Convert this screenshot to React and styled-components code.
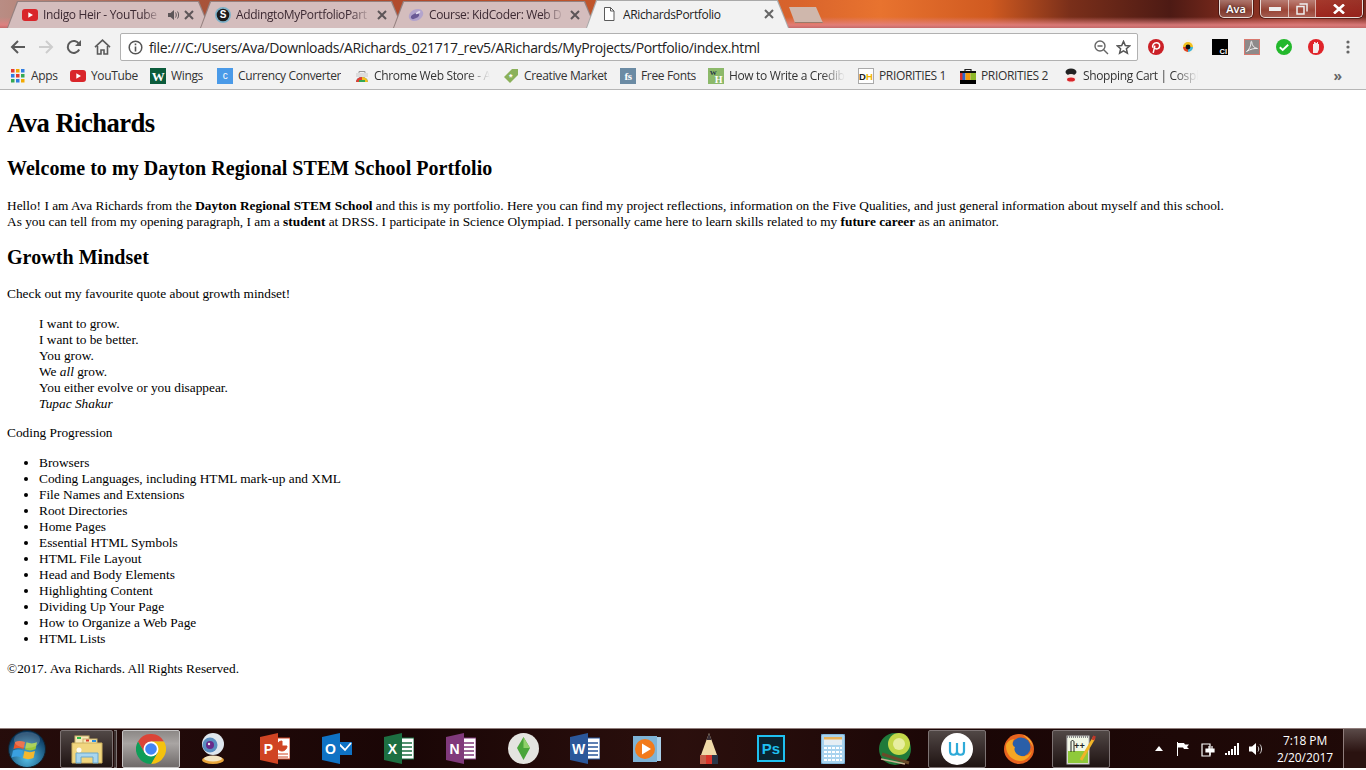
import React from 'react'
import styled, { createGlobalStyle } from 'styled-components'

const GlobalStyle = createGlobalStyle`
  html, body { margin: 0; padding: 0; background: #fff; overflow: hidden; }
`

const UI_FONT = `'Open Sans', 'Noto Sans', sans-serif`

const Screen = styled.div`
  width: 1366px;
  height: 770px;
  display: flex;
  flex-direction: column;
  background: #fff;
  overflow: hidden;
`

/* ---------- title bar + tabs ---------- */

const TitleBar = styled.div`
  height: 28px;
  flex: none;
  display: flex;
  align-items: flex-end;
  padding-left: 7px;
  position: relative;
  background:
    linear-gradient(180deg, rgba(224, 120, 120, 0) 0, rgba(224, 120, 120, 0) 17px, rgba(226, 128, 128, 0.9) 25px, #c56a6a 28px),
    linear-gradient(90deg, #b98d84 0, #a8533a 200px, #b2492a 420px, #c0552a 600px, #d9642c 800px, #e8732f 880px, #d05a20 990px, #7a2f1a 1070px, #4d1a14 1170px, #7c2a1c 1230px, #9a3a2a 1300px, #7a2a20 1366px);
`

const TabShape = styled.div`
  width: 203px;
  height: 27px;
  flex: none;
  margin-right: -10px;
  position: relative;
  display: flex;
  align-items: center;
  padding: 0 14px 0 15px;
  box-sizing: border-box;
  background: ${p => (p.$active ? '#a9a9a9' : '#94807f')};
  clip-path: polygon(10px 0, calc(100% - 11px) 0, 100% 100%, 0 100%);
  font: 12px ${UI_FONT};
  letter-spacing: -0.35px;
  color: ${p => (p.$active ? '#222' : '#3d2a33')};
  ${p => p.$active && 'height: 28px;'}

  &::before {
    content: '';
    position: absolute;
    inset: 1px 1px 0 1px;
    background: ${p => (p.$active ? '#f2f2f2' : '#d4bdbd')};
    clip-path: polygon(10px 0, calc(100% - 11px) 0, 100% 100%, 0 100%);
  }
`

const TabIcon = styled.span`
  width: 16px;
  height: 16px;
  flex: none;
  margin-right: ${p => p.$mr ?? 5}px;
  display: flex;
  position: relative;
`

const TabTitle = styled.span`
  width: ${p => p.$w}px;
  flex: none;
  overflow: hidden;
  white-space: nowrap;
  position: relative;
  ${p => p.$fade && `
    mask-image: linear-gradient(90deg, #000 85%, transparent 100%);
  `}
`

const TabIconSlot = styled.span`
  display: flex;
  position: relative;
  flex: none;
  margin-left: ${p => p.$ml || 0}px;
`

const NewTab = styled.div`
  width: 34px;
  height: 16px;
  margin: 0 0 5px 10px;
  background: #cfb7ac;
  border-bottom: 1px solid #9a7a6a;
  box-sizing: border-box;
  clip-path: polygon(0 0, 27px 0, 100% 100%, 6px 100%);
  flex: none;
`

const WindowControls = styled.div`
  position: absolute;
  top: 0;
  right: 3px;
  display: flex;
  gap: 7px;
`

const GlassButton = styled.div`
  height: 18px;
  display: flex;
  box-sizing: border-box;
  border: 1px solid #e8dcd8;
  border-top: 0;
  border-radius: 0 0 5px 5px;
  box-shadow: 0 0 0 1px rgba(40, 10, 10, 0.55);
  overflow: hidden;
  font: 600 11px ${UI_FONT};
  color: #fff;
  text-shadow: 0 0 3px #222;
`

const GlassCell = styled.span`
  width: ${p => p.$w}px;
  box-sizing: border-box;
  display: flex;
  align-items: center;
  justify-content: center;
  background: linear-gradient(180deg, rgba(255, 255, 255, 0.35), rgba(255, 255, 255, 0.08) 60%, rgba(255, 255, 255, 0.2));
  border-left: ${p => (p.$sep ? '1px solid rgba(255,255,255,.6)' : '0')};
  ${p => p.$red && 'background: linear-gradient(180deg, rgba(190, 60, 50, .45), rgba(160, 30, 25, .7));'}
`

/* ---------- toolbar ---------- */

const Toolbar = styled.div`
  height: 34px;
  flex: none;
  box-sizing: border-box;
  display: flex;
  align-items: center;
  background: #f2f2f2;
  padding: 4px 0 0 4px;
`

const NavButton = styled.span`
  width: 28px;
  height: 28px;
  flex: none;
  display: flex;
  align-items: center;
  justify-content: center;
`

const Omnibox = styled.div`
  width: 1018px;
  height: 28px;
  margin-left: 4px;
  box-sizing: border-box;
  border: 1px solid #b1b1b1;
  border-radius: 2px;
  background: #fff;
  display: flex;
  align-items: center;
  gap: 7px;
  padding: 0 6px 0 7px;
  flex: none;
`

const Url = styled.span`
  flex: 1;
  margin-left: -1px;
  font: 14px ${UI_FONT};
  letter-spacing: -0.34px;
  color: #222;
  white-space: nowrap;
`

const ExtIcons = styled.div`
  display: flex;
  margin-left: 2px;
`

const ExtSlot = styled.span`
  width: 32px;
  height: 28px;
  display: flex;
  align-items: center;
  justify-content: center;
  flex: none;
`

/* ---------- bookmarks ---------- */

const BookmarkBar = styled.div`
  height: 28px;
  flex: none;
  box-sizing: border-box;
  display: flex;
  align-items: center;
  background: #f2f2f2;
  border-bottom: 1px solid #b6b6b6;
  padding-left: 11px;
`

const Bookmark = styled.div`
  width: ${p => p.$w}px;
  flex: none;
  display: flex;
  align-items: center;
  gap: ${p => p.$gap ?? 5}px;
  font: 12px ${UI_FONT};
  letter-spacing: -0.35px;
  color: #333;
  white-space: nowrap;
  overflow: hidden;
`

const BookmarkLabel = styled.span`
  overflow: hidden;
  width: ${p => (p.$tw ? `${p.$tw}px` : 'auto')};
  flex: none;
  ${p => p.$fade && 'mask-image: linear-gradient(90deg, #000 80%, transparent 100%);'}
`

const Overflow = styled.span`
  margin-left: auto;
  margin-right: 24px;
  font: 700 14px ${UI_FONT};
  color: #666;
`

/* ---------- page ---------- */

const Page = styled.main`
  flex: 1;
  padding: 0 7px;
  font-family: 'Liberation Serif', 'Times New Roman', serif;
  font-size: 13.33px;
  line-height: 16px;
  color: #000;
  overflow: hidden;

  h1 { font-size: 26.67px; line-height: 30px; margin: 17.87px 0; letter-spacing: -0.55px; }
  h2 { font-size: 20px; line-height: 24px; margin: 14.8px 0 17.4px; letter-spacing: 0.05px; }
  h1 + h2 { margin: 16.6px 0 18.4px; }
  p { margin: 13.33px 0; }
`

const Quote = styled.blockquote`
  margin: 13.33px 32px;
`

const Topics = styled.ul`
  margin: 14.5px 0 13.33px;
  padding-left: 32px;
`

/* ---------- taskbar ---------- */

const Taskbar = styled.footer`
  height: 40px;
  flex: none;
  margin-bottom: 2px;
  display: flex;
  align-items: stretch;
  box-sizing: border-box;
  border-top: 1px solid #8f7d7b;
  background:
    linear-gradient(90deg, rgba(60, 25, 20, 0.35), rgba(30, 5, 5, 0) 30%, rgba(60, 25, 20, 0.5) 50%, rgba(20, 5, 5, 0) 70%, rgba(40, 15, 10, 0.4)),
    #1a0606;
  color: #fff;
`

const Orb = styled.div`
  width: 58px;
  flex: none;
  display: flex;
  align-items: center;
  justify-content: center;
  padding-right: 4px;
  box-sizing: border-box;
`

const TaskSlot = styled.div`
  width: 62px;
  flex: none;
  display: flex;
  align-items: center;
  justify-content: ${p => (p.$pinned ? 'flex-start' : 'center')};
  padding-left: ${p => (p.$pinned ? 2 : 0)}px;
  box-sizing: border-box;
  gap: 1px;
`

const TaskButton = styled.div`
  width: ${p => p.$w || 58}px;
  height: 38px;
  flex: none;
  box-sizing: border-box;
  display: flex;
  align-items: center;
  justify-content: center;
  border: 1px solid ${p => (p.$active ? '#c6c4c4' : '#7d7373')};
  border-radius: 2px;
  background: ${p => (p.$active
    ? 'linear-gradient(180deg, #8c8886 0, #a9a5a3 35%, #6f6a69 100%)'
    : 'linear-gradient(180deg, #514846 0, #3a2f2e 45%, #1f1412 100%)')};
`

const StackTail = styled.span`
  width: 3px;
  height: 38px;
  flex: none;
  box-sizing: border-box;
  border: 1px solid #7d7373;
  border-left: 0;
  background: #3a2f2e;
`

const Tray = styled.div`
  flex: 1;
  display: flex;
  align-items: center;
  justify-content: flex-end;
`

const TrayIcon = styled.span`
  width: ${p => p.$w || 24}px;
  display: flex;
  justify-content: center;
  flex: none;
`

const Clock = styled.div`
  width: 70px;
  margin-left: 2px;
  text-align: center;
  font: 12px/17px ${UI_FONT};
  letter-spacing: -0.1px;
  color: #fff;
  flex: none;
`

const ShowDesktop = styled.div`
  width: 23px;
  flex: none;
  margin-left: 3px;
  border-left: 1px solid #8f7d7b;
  box-sizing: border-box;
  background: linear-gradient(180deg, #5a4a48, #2a1210 60%);
`

/* ---------- icons ---------- */

const Ytb = ({ s = 16 }) => (
  <svg width={s} height={s} viewBox="0 0 16 16">
    <rect x="0" y="2" width="16" height="12" rx="3" fill="#d9252a" />
    <path d="M6.3 5.2v5.6L11 8z" fill="#fff" />
  </svg>
)

const Steemit = () => (
  <svg width="16" height="16" viewBox="0 0 16 16">
    <circle cx="8" cy="8" r="8" fill="#7fb2c9" />
    <circle cx="8" cy="8" r="6.3" fill="#1c1c1c" />
    <text x="8" y="11.3" textAnchor="middle" fontSize="10" fontWeight="700" fontFamily="Liberation Sans" fill="#fff">S</text>
  </svg>
)

const Planet = () => (
  <svg width="16" height="16" viewBox="0 0 16 16">
    <ellipse cx="8" cy="8" rx="7.6" ry="5.6" transform="rotate(-28 8 8)" fill="#b3a4cc" />
    <ellipse cx="7" cy="9" rx="4.5" ry="2.4" transform="rotate(-28 7 9)" fill="#6a5a96" />
    <ellipse cx="10" cy="5.6" rx="2.6" ry="1.1" transform="rotate(-28 10 5.6)" fill="#e6e0f0" />
  </svg>
)

const PageDoc = () => (
  <svg width="16" height="16" viewBox="0 0 16 16" fill="none" stroke="#5a5a5a" strokeWidth="1">
    <path d="M3.5 1.5h6l3.5 3.5v9.5h-9.5z" fill="#fff" />
    <path d="M9.5 1.5v3.5H13" />
  </svg>
)

const CloseX = ({ c = '#5d5558' }) => (
  <svg width="10" height="10" viewBox="0 0 10 10">
    <path d="M1 1l8 8M9 1l-8 8" stroke={c} strokeWidth="2" />
  </svg>
)

const Speaker = () => (
  <svg width="11" height="10" viewBox="0 0 11 10" fill="#5d5558">
    <path d="M0 3h2.5L6 0v10L2.5 7H0z" />
    <path d="M7.5 2.5c1 1.5 1 3.5 0 5M9.5 1.5c1.5 2 1.5 5 0 7" stroke="#5d5558" strokeWidth="1" fill="none" />
  </svg>
)

const Back = ({ c = '#5a5a5a' }) => (
  <svg width="16" height="14" viewBox="0 0 16 14" fill="none" stroke={c} strokeWidth="2">
    <path d="M15 7H2M8 1L2 7l6 6" />
  </svg>
)

const Forward = ({ c = '#cdcdcd' }) => (
  <svg width="16" height="14" viewBox="0 0 16 14" fill="none" stroke={c} strokeWidth="2">
    <path d="M1 7h13M8 1l6 6-6 6" />
  </svg>
)

const Reload = () => (
  <svg width="16" height="16" viewBox="0 0 16 16" fill="none">
    <path d="M13.2 10.5A6 6 0 1 1 13 5" stroke="#5a5a5a" strokeWidth="2" />
    <path d="M15 1v6H9z" fill="#5a5a5a" />
  </svg>
)

const HomeIcon = () => (
  <svg width="17" height="16" viewBox="0 0 17 16" fill="none" stroke="#5a5a5a" strokeWidth="1.6">
    <path d="M1 8.2L8.5 1.2 16 8.2" />
    <path d="M3.5 7v8H7v-4h3v4h3.5V7" />
  </svg>
)

const InfoIcon = () => (
  <svg width="15" height="15" viewBox="0 0 15 15" fill="none">
    <circle cx="7.5" cy="7.5" r="6.3" stroke="#555" strokeWidth="1.5" />
    <path d="M7.5 6.5v5M7.5 3.5v1.8" stroke="#555" strokeWidth="1.6" />
  </svg>
)

const ZoomOut = () => (
  <svg width="15" height="15" viewBox="0 0 15 15" fill="none" stroke="#666" strokeWidth="1.4">
    <circle cx="6" cy="6" r="5" />
    <path d="M3.5 6h5M9.7 9.7L14 14" />
  </svg>
)

const Star = () => (
  <svg width="15" height="15" viewBox="0 0 15 15" fill="none" stroke="#555" strokeWidth="1.5">
    <path d="M7.5 1.4l1.8 4.1 4.4.4-3.3 2.9 1 4.4-3.9-2.3-3.9 2.3 1-4.4L1.3 5.9l4.4-.4z" />
  </svg>
)

const Pinterest = () => (
  <svg width="16" height="16" viewBox="0 0 16 16">
    <circle cx="8" cy="8" r="8" fill="#cb2027" />
    <path d="M5.2 13.8l1.7-7.2M5 8.8C3.8 6 6 3.7 8.4 3.7c2.3 0 3.6 1.7 3.2 3.8-.4 2-2.8 3.2-4.5 1.8" stroke="#fff" strokeWidth="1.5" fill="none" />
  </svg>
)

const ColorPick = () => (
  <svg width="16" height="16" viewBox="0 0 16 16">
    <circle cx="8" cy="8" r="7.5" fill="#f4f0ea" />
    <path d="M3 8a5 5 0 0 1 10 0z" fill="#f3c11e" />
    <path d="M13 8a5 5 0 0 1-5 5 3 3 0 0 1 2-5z" fill="#3fb4d8" />
    <path d="M3 8a5 5 0 0 0 5 5V8z" fill="#e2411f" />
    <circle cx="8" cy="8" r="2.4" fill="#111" />
  </svg>
)

const CiBadge = () => (
  <svg width="16" height="16" viewBox="0 0 16 16">
    <rect width="16" height="16" fill="#000" />
    <text x="15" y="14.5" textAnchor="end" fontSize="7.5" fontWeight="700" fontFamily="Liberation Sans" fill="#fff">CI</text>
  </svg>
)

const PdfIcon = () => (
  <svg width="16" height="16" viewBox="0 0 16 16">
    <rect x=".5" y=".5" width="15" height="15" fill="#8e8a8a" stroke="#d8796f" />
    <path d="M2.5 12.5C5 11 7 7 7 3c0-1 .8-1 .8 0 0 3 2 6 5.7 6.5-3-.3-7 .5-11 3z" fill="none" stroke="#eee" strokeWidth="1" />
  </svg>
)

const CheckBadge = () => (
  <svg width="16" height="16" viewBox="0 0 16 16">
    <circle cx="8" cy="8" r="8" fill="#23b82c" />
    <path d="M3.8 8.3l2.9 2.7 5.5-5.2" stroke="#fff" strokeWidth="1.9" fill="none" />
  </svg>
)

const OperaStop = () => (
  <svg width="16" height="16" viewBox="0 0 16 16">
    <circle cx="8" cy="8" r="8" fill="#e0242a" />
    <path d="M5 14V5h1V3h1.5v1H9V3h1v2h1v5.500L9.5 14z" fill="#f3ecec" />
  </svg>
)

const Dots = () => (
  <svg width="4" height="14" viewBox="0 0 4 14" fill="#666">
    <circle cx="2" cy="2" r="1.6" />
    <circle cx="2" cy="7" r="1.6" />
    <circle cx="2" cy="12" r="1.6" />
  </svg>
)

const AppsGrid = () => {
  const cols = ['#e53b2f', '#f2a900', '#2f7de1', '#2f7de1', '#e53b2f', '#34a853', '#34a853', '#2f7de1', '#f2a900']
  return (
    <svg width="14" height="14" viewBox="0 0 14 14">
      {cols.map((c, i) => (
        <rect key={i} x={(i % 3) * 5} y={Math.floor(i / 3) * 5} width="3.5" height="3.5" fill={c} />
      ))}
    </svg>
  )
}

const Tile = ({ bg, fg = '#fff', t, size = 12, family = 'Liberation Serif', weight = 700, y = 12.5 }) => (
  <svg width="16" height="16" viewBox="0 0 16 16">
    <rect width="16" height="16" fill={bg} />
    <text x="8" y={y} textAnchor="middle" fontSize={size} fontWeight={weight} fontFamily={family} fill={fg}>{t}</text>
  </svg>
)

const StoreIcon = () => (
  <svg width="16" height="16" viewBox="0 0 16 16">
    <path d="M5 6V3.5h6V6" fill="none" stroke="#999" />
    <rect x="2" y="5" width="12" height="4" fill="#ddd" />
    <path d="M2 14a6 5 0 0 1 12 0z" fill="#3a87d9" />
    <path d="M2 14a6 5 0 0 1 6-5v5z" fill="#e2402f" />
    <path d="M8 9a6 5 0 0 1 6 5H8z" fill="#f3c11e" />
    <rect x="5" y="12" width="6" height="2" fill="#34a853" />
  </svg>
)

const MarketTag = () => (
  <svg width="16" height="16" viewBox="0 0 16 16">
    <path d="M1 9l8-8h6v6l-8 8z" fill="#8bb15a" />
    <text x="7.5" y="12" textAnchor="middle" fontSize="9" fontWeight="700" fontFamily="Liberation Sans" fill="#fff">*</text>
  </svg>
)

const HowIcon = () => (
  <svg width="16" height="16" viewBox="0 0 16 16">
    <rect width="16" height="16" fill="#8cb96a" />
    <text x="5" y="7" textAnchor="middle" fontSize="7" fontWeight="700" fontFamily="Liberation Serif" fill="#234">W</text>
    <text x="10.5" y="15" textAnchor="middle" fontSize="10" fontWeight="700" fontFamily="Liberation Serif" fill="#fff">H</text>
  </svg>
)

const DhIcon = () => (
  <svg width="16" height="16" viewBox="0 0 16 16">
    <rect x=".5" y=".5" width="15" height="15" fill="#fff" stroke="#aaa" />
    <text x="1" y="12" fontSize="9.5" fontWeight="700" fontFamily="Liberation Sans" fill="#222">D</text>
    <text x="8" y="12" fontSize="9.5" fontWeight="700" fontFamily="Liberation Sans" fill="#f2b400">H</text>
  </svg>
)

const BagIcon = () => (
  <svg width="16" height="16" viewBox="0 0 16 16">
    <path d="M5 4V1.5h6V4" fill="none" stroke="#222" strokeWidth="1.2" />
    <rect y="3" width="16" height="2" fill="#111" />
    <rect y="5" width="5.5" height="7" fill="#2b66d0" />
    <rect x="5.5" y="5" width="5" height="7" fill="#f29a10" />
    <rect x="10.5" y="5" width="5.5" height="7" fill="#8fb82a" />
    <rect y="5" width="2.5" height="7" fill="#d9302a" />
    <rect y="12" width="16" height="4" fill="#000" />
  </svg>
)

const CosplayIcon = () => (
  <svg width="16" height="16" viewBox="0 0 16 16">
    <ellipse cx="8" cy="4" rx="5.5" ry="3.5" fill="#222" />
    <ellipse cx="8" cy="10.5" rx="5" ry="4.5" fill="#f6e8e4" />
    <ellipse cx="8" cy="11.5" rx="4" ry="2" fill="#d9252a" />
  </svg>
)

const WinOrb = () => (
  <svg width="38" height="38" viewBox="0 0 38 38">
    <defs>
      <radialGradient id="orb" cx="50%" cy="75%" r="65%">
        <stop offset="0" stopColor="#55c0e8" />
        <stop offset="1" stopColor="#0b3a62" />
      </radialGradient>
    </defs>
    <circle cx="19" cy="19" r="18.5" fill="url(#orb)" stroke="#12222e" />
    <path d="M7 12c3-1.5 6-1.5 10 0l-1.5 7c-3.5-1.5-6.5-1.5-10 0z" fill="#e8562a" />
    <path d="M18.5 12.3c3.5 1.5 7 1.5 10.5 0l-1.5 7c-3.5 1.5-7 1.5-10.5 0z" fill="#9cc83a" />
    <path d="M5 20.5c3.5-1.5 6.5-1.5 10 0l-1.5 7c-3.5-1.5-6.5-1.5-10 0z" fill="#3aa0e0" />
    <path d="M16.5 21c3.5 1.5 7 1.5 10.5 0l-1.5 7c-3.5 1.5-7 1.5-10.5 0z" fill="#f4b82e" />
    <ellipse cx="19" cy="10" rx="13" ry="8" fill="#fff" opacity=".18" />
  </svg>
)

const Explorer = () => (
  <svg width="32" height="30" viewBox="0 0 32 30">
    <rect x="4" y="2" width="14" height="8" fill="#f7e9b8" stroke="#c9b168" />
    <rect x="6" y="3" width="4" height="2" fill="#2fb84a" />
    <rect x="12" y="5" width="14" height="6" fill="#f7e9b8" stroke="#c9b168" />
    <rect x="15" y="5.5" width="3" height="2" fill="#d93a2a" />
    <rect x="21" y="6" width="4" height="2" fill="#2f8fe0" />
    <path d="M1 9h30v20H1z" fill="#f1d67f" stroke="#cdb060" />
    <path d="M5 29V19h22v10h-5v-6H10v6z" fill="#a8d6ef" stroke="#6aa8cc" />
    <circle cx="8" cy="16" r="2.5" fill="#fff" opacity=".9" />
  </svg>
)

const ChromeLogo = () => (
  <svg width="30" height="30" viewBox="0 0 30 30">
    <path d="M28 7.5A15 15 0 0 0 2 7.5L8.5 18.75 15 15V7.5z" fill="#db4437" />
    <path d="M28 7.5A15 15 0 0 1 15 30l6.5-11.25L15 15V7.5z" fill="#f4c20d" />
    <path d="M15 30A15 15 0 0 1 2 7.5l6.5 11.25L15 15l6.5 3.75z" fill="#0f9d58" />
    <circle cx="15" cy="15" r="7.5" fill="#fff" />
    <circle cx="15" cy="15" r="5.8" fill="#4285f4" />
  </svg>
)

const Webcam = () => (
  <svg width="26" height="32" viewBox="0 0 26 32">
    <ellipse cx="13" cy="27" rx="11" ry="4" fill="#e9a63c" />
    <ellipse cx="13" cy="25.5" rx="9" ry="3" fill="#f3e5c4" />
    <circle cx="13" cy="11" r="11" fill="#dfe7ee" />
    <circle cx="10" cy="12" r="7.5" fill="#5a8ec0" />
    <circle cx="10" cy="12" r="4" fill="#6a2a8a" />
    <circle cx="9" cy="11" r="1.2" fill="#eee" />
  </svg>
)

const OfficeIcon = ({ dark, letter, chart }) => (
  <svg width="30" height="31" viewBox="0 0 30 31">
    <rect x="15" y="5" width="15" height="21" fill="#fff" stroke={dark} strokeWidth="1" />
    {chart
      ? <path d="M22 8a5 5 0 1 0 5 5h-5zM18 21h10M18 24h10" fill={dark} stroke={dark} />
      : <path d="M18 10h10M18 14h10M18 18h10M18 22h10" stroke={dark} strokeWidth="1.6" />}
    <path d="M0 4L18 0v31L0 27z" fill={dark} />
    <text x="8.5" y="21" textAnchor="middle" fontSize="14" fontWeight="700" fontFamily="Liberation Sans" fill="#fff">{letter}</text>
  </svg>
)

const OutlookEnv = () => (
  <svg width="30" height="31" viewBox="0 0 30 31">
    <rect x="15" y="9" width="15" height="13" fill="#0f72c4" />
    <path d="M16 10l7 7 6-7" fill="none" stroke="#fff" strokeWidth="1.8" />
    <path d="M0 4L18 0v31L0 27z" fill="#0f72c4" />
    <text x="8.5" y="21" textAnchor="middle" fontSize="14" fontWeight="700" fontFamily="Liberation Sans" fill="#fff">O</text>
  </svg>
)

const Sims = () => (
  <svg width="31" height="31" viewBox="0 0 31 31">
    <circle cx="15.5" cy="15.5" r="15.5" fill="#e4e4e0" />
    <path d="M15.5 4L22 15l-6.500 12L9 15z" fill="#4aa53a" />
    <path d="M15.5 4L22 15h-6.500z" fill="#8fd06a" />
  </svg>
)

const MediaPlayer = () => (
  <svg width="28" height="26" viewBox="0 0 28 26">
    <rect x="3" y="1" width="25" height="24" fill="#a9cfe8" />
    <rect x="0" y="0" width="24" height="26" fill="#7eb3d6" />
    <circle cx="12" cy="13" r="10" fill="#f27a1a" />
    <path d="M9 7.5v11l9-5.5z" fill="#fff" />
  </svg>
)

const Pencil = () => (
  <svg width="18" height="32" viewBox="0 0 18 32">
    <path d="M9 0L1 22h16z" fill="#f0d9a8" />
    <path d="M9 0L6.5 7h5z" fill="#3a3038" />
    <path d="M0 22h6v9H0z" fill="#c4604a" />
    <path d="M6 22h6v9H6z" fill="#d9342a" />
    <path d="M12 22h6v9h-6z" fill="#2a3648" />
  </svg>
)

const Photoshop = () => (
  <svg width="28" height="27" viewBox="0 0 28 27">
    <rect x="1" y="1" width="26" height="25" fill="#0a2430" stroke="#1fc0f0" strokeWidth="2" />
    <text x="14" y="19" textAnchor="middle" fontSize="15" fontWeight="700" fontFamily="Liberation Sans" fill="#1fc0f0">Ps</text>
  </svg>
)

const Calc = () => (
  <svg width="24" height="30" viewBox="0 0 24 30">
    <rect width="24" height="30" rx="2" fill="#a9d3ee" stroke="#5e9cc6" />
    <rect x="3" y="3" width="18" height="8" fill="#e6eef4" />
    <rect x="3" y="3" width="18" height="2.5" fill="#e8b25a" />
    <path d="M3 14h18M3 18h18M3 22h18M3 26h18" stroke="#fff" strokeWidth="2" strokeDasharray="3 1" />
  </svg>
)

const PaintBall = () => (
  <svg width="32" height="32" viewBox="0 0 32 32">
    <circle cx="16" cy="16" r="16" fill="#1f7a3a" />
    <circle cx="20" cy="11" r="11" fill="#c4d84a" />
    <circle cx="20" cy="11" r="6" fill="#e7eea0" />
    <path d="M3 21L30 30" stroke="#6a4a2a" strokeWidth="3" />
    <path d="M2 26l24 5" stroke="#c9b090" strokeWidth="1.5" />
  </svg>
)

const WBubble = () => (
  <svg width="32" height="32" viewBox="0 0 32 32">
    <circle cx="16" cy="16" r="16" fill="#fff" />
    <path d="M9 9v9c0 5 7 5 7 0v-8M16 18c0 5 7 5 7 0V9" fill="none" stroke="#2eaad8" strokeWidth="2.2" />
  </svg>
)

const Firefox = () => (
  <svg width="30" height="30" viewBox="0 0 30 30">
    <circle cx="15" cy="15" r="15" fill="#e8631f" />
    <circle cx="17" cy="13" r="9.5" fill="#2a5fa8" />
    <path d="M2 12c0 10 8 15 14 15s11-5 12-11c-2 5-7 7-11 6S9 17 11 13c-3-1-3-5-1-8-5 1-8 4-8 7z" fill="#f5a623" />
    <path d="M19 1c5 2 9 6 10 12-2-5-6-9-10-12z" fill="#f5c33b" />
  </svg>
)

const Notepad = () => (
  <svg width="30" height="32" viewBox="0 0 30 32">
    <rect x="1" y="3" width="22" height="28" fill="#f2f7e6" stroke="#bbb" />
    <rect x="2" y="18" width="20" height="12" fill="#8fc93a" />
    <path d="M1 4h22" stroke="#888" strokeWidth="2" strokeDasharray="1 1" />
    <text x="8" y="16" fontSize="9" fontWeight="700" fontFamily="Liberation Mono" fill="#222">++</text>
    <path d="M5 19V9c0-2 3-2 3 0v10" fill="none" stroke="#222" strokeWidth="1" />
    <path d="M15 27L28 5" stroke="#f0b428" strokeWidth="3" />
    <path d="M27 7l1.500-4" stroke="#c0392b" strokeWidth="3" />
  </svg>
)

const TrayFlag = () => (
  <svg width="14" height="14" viewBox="0 0 14 14" fill="#fff">
    <path d="M1 0h1v14H1z" />
    <path d="M2 1h6l1 1.5h4l-2 2.5 2 2H8L7 5.5H2z" />
  </svg>
)

const TrayPower = () => (
  <svg width="14" height="16" viewBox="0 0 14 16" fill="none" stroke="#fff" strokeWidth="1.2">
    <path d="M1 3h8v12H1z" />
    <path d="M5 8h8v3H5zM8 5v3M11 5v3M9 11v3" fill="#fff" />
  </svg>
)

const TraySignal = () => (
  <svg width="15" height="12" viewBox="0 0 15 12" fill="#fff">
    <rect x="0" y="10" width="2" height="2" />
    <rect x="3" y="8" width="2" height="4" />
    <rect x="6" y="6" width="2" height="6" />
    <rect x="9" y="3" width="2" height="9" />
    <rect x="12" y="0" width="2" height="12" />
  </svg>
)

const TraySound = () => (
  <svg width="15" height="14" viewBox="0 0 15 14" fill="#fff">
    <path d="M0 4.5h3L7 1v12L3 9.5H0z" />
    <path d="M9 4.5c1 1.5 1 3.5 0 5M11 2.5c2 2.5 2 6.5 0 9" fill="none" stroke="#ddd" strokeWidth="1" />
  </svg>
)

/* ---------- data ---------- */

const bookmarks = [
  { w: 59, gap: 6, icon: <AppsGrid />, label: 'Apps' },
  { w: 80, icon: <Ytb />, label: 'YouTube' },
  { w: 67, icon: <Tile bg="#0c5c3c" t="W" size={13} />, label: 'Wings' },
  { w: 137, icon: <Tile bg="#4a9ae8" t="c" size={10} family="Liberation Sans" weight={400} y={11} />, label: 'Currency Converter' },
  { w: 149, gap: 4, icon: <StoreIcon />, label: 'Chrome Web Store - A', tw: 116, fade: true },
  { w: 117, icon: <MarketTag />, label: 'Creative Market' },
  { w: 88, icon: <Tile bg="#6b8ba4" t="fs" size={11} y={12} />, label: 'Free Fonts' },
  { w: 150, icon: <HowIcon />, label: 'How to Write a Credib', tw: 116, fade: true },
  { w: 102, icon: <DhIcon />, label: 'PRIORITIES 1' },
  { w: 103, icon: <BagIcon />, label: 'PRIORITIES 2' },
  { w: 135, gap: 4, icon: <CosplayIcon />, label: 'Shopping Cart | Cospl', tw: 115, fade: true },
]

const topics = [
  'Browsers',
  'Coding Languages, including HTML mark-up and XML',
  'File Names and Extensions',
  'Root Directories',
  'Home Pages',
  'Essential HTML Symbols',
  'HTML File Layout',
  'Head and Body Elements',
  'Highlighting Content',
  'Dividing Up Your Page',
  'How to Organize a Web Page',
  'HTML Lists',
]

const taskApps = [
  { key: 'chrome', icon: <ChromeLogo />, button: 'active' },
  { key: 'cam', icon: <Webcam /> },
  { key: 'ppt', icon: <OfficeIcon dark="#d04423" letter="P" chart /> },
  { key: 'outlook', icon: <OutlookEnv /> },
  { key: 'excel', icon: <OfficeIcon dark="#1d6f42" letter="X" /> },
  { key: 'onenote', icon: <OfficeIcon dark="#80397b" letter="N" /> },
  { key: 'sims', icon: <Sims /> },
  { key: 'word', icon: <OfficeIcon dark="#2b579a" letter="W" /> },
  { key: 'wmp', icon: <MediaPlayer /> },
  { key: 'pencil', icon: <Pencil /> },
  { key: 'ps', icon: <Photoshop /> },
  { key: 'calc', icon: <Calc /> },
  { key: 'paint', icon: <PaintBall /> },
  { key: 'w', icon: <WBubble />, button: 'idle' },
  { key: 'firefox', icon: <Firefox /> },
  { key: 'npp', icon: <Notepad />, button: 'idle' },
]

export default function App() {
  return (
    <Screen>
      <GlobalStyle />
      <TitleBar>
        <TabShape>
          <TabIcon><Ytb /></TabIcon>
          <TabTitle $w={118} $fade>Indigo Heir - YouTube</TabTitle>
          <TabIconSlot $ml={7}><Speaker /></TabIconSlot>
          <TabIconSlot $ml={5}><CloseX /></TabIconSlot>
        </TabShape>
        <TabShape>
          <TabIcon><Steemit /></TabIcon>
          <TabTitle $w={135} $fade>AddingtoMyPortfolioPart</TabTitle>
          <TabIconSlot $ml={6}><CloseX /></TabIconSlot>
        </TabShape>
        <TabShape>
          <TabIcon><Planet /></TabIcon>
          <TabTitle $w={135} $fade>Course: KidCoder: Web D</TabTitle>
          <TabIconSlot $ml={6}><CloseX /></TabIconSlot>
        </TabShape>
        <TabShape $active>
          <TabIcon $mr={6}><PageDoc /></TabIcon>
          <TabTitle $w={135}>ARichardsPortfolio</TabTitle>
          <TabIconSlot $ml={6}><CloseX c="#666" /></TabIconSlot>
        </TabShape>
        <NewTab />
        <WindowControls>
          <GlassButton><GlassCell $w={32}>Ava</GlassCell></GlassButton>
          <GlassButton>
            <GlassCell $w={27}>
              <svg width="12" height="5" viewBox="0 0 12 5"><rect width="12" height="4" y="1" fill="#eee" /></svg>
            </GlassCell>
            <GlassCell $w={27} $sep>
              <svg width="12" height="12" viewBox="0 0 12 12" fill="none" stroke="#eee" strokeWidth="1.5"><rect x="1" y="3.5" width="7" height="7.5" /><path d="M3.5 1H11v7.5" /></svg>
            </GlassCell>
            <GlassCell $w={47} $sep $red>
              <svg width="12" height="10" viewBox="0 0 12 10"><path d="M1 .5l10 9M11 .5l-10 9" stroke="#fff" strokeWidth="2.6" /></svg>
            </GlassCell>
          </GlassButton>
        </WindowControls>
      </TitleBar>

      <Toolbar>
        <NavButton><Back /></NavButton>
        <NavButton><Forward /></NavButton>
        <NavButton><Reload /></NavButton>
        <NavButton><HomeIcon /></NavButton>
        <Omnibox>
          <InfoIcon />
          <Url>file:///C:/Users/Ava/Downloads/ARichards_021717_rev5/ARichards/MyProjects/Portfolio/index.html</Url>
          <ZoomOut />
          <Star />
        </Omnibox>
        <ExtIcons>
          <ExtSlot><Pinterest /></ExtSlot>
          <ExtSlot><ColorPick /></ExtSlot>
          <ExtSlot><CiBadge /></ExtSlot>
          <ExtSlot><PdfIcon /></ExtSlot>
          <ExtSlot><CheckBadge /></ExtSlot>
          <ExtSlot><OperaStop /></ExtSlot>
          <ExtSlot><Dots /></ExtSlot>
        </ExtIcons>
      </Toolbar>

      <BookmarkBar>
        {bookmarks.map(b => (
          <Bookmark key={b.label} $w={b.w} $gap={b.gap}>
            {b.icon}
            <BookmarkLabel $tw={b.tw} $fade={b.fade}>{b.label}</BookmarkLabel>
          </Bookmark>
        ))}
        <Overflow>»</Overflow>
      </BookmarkBar>

      <Page>
        <h1>Ava Richards</h1>
        <h2>Welcome to my Dayton Regional STEM School Portfolio</h2>
        <p>
          Hello! I am Ava Richards from the <strong>Dayton Regional STEM School</strong> and this is my portfolio. Here you can find my project reflections, information on the Five Qualities, and just general information about myself and this school.
          <br />
          As you can tell from my opening paragraph, I am a <strong>student</strong> at DRSS. I participate in Science Olympiad. I personally came here to learn skills related to my <strong>future career</strong> as an animator.
        </p>
        <h2>Growth Mindset</h2>
        <p>Check out my favourite quote about growth mindset!</p>
        <Quote>
          I want to grow.<br />
          I want to be better.<br />
          You grow.<br />
          We <em>all</em> grow.<br />
          You either evolve or you disappear.<br />
          <em>Tupac Shakur</em>
        </Quote>
        <p>Coding Progression</p>
        <Topics>
          {topics.map(t => <li key={t}>{t}</li>)}
        </Topics>
        <p>©2017. Ava Richards. All Rights Reserved.</p>
      </Page>

      <Taskbar>
        <Orb><WinOrb /></Orb>
        <TaskSlot $pinned>
          <TaskButton $w={53}><Explorer /></TaskButton>
          <StackTail />
        </TaskSlot>
        {taskApps.map(a => (
          <TaskSlot key={a.key}>
            {a.button
              ? <TaskButton $active={a.button === 'active'}>{a.icon}</TaskButton>
              : a.icon}
          </TaskSlot>
        ))}
        <Tray>
          <TrayIcon>
            <svg width="8" height="5" viewBox="0 0 8 5"><path d="M4 0l4 5H0z" fill="#fff" /></svg>
          </TrayIcon>
          <TrayIcon><TrayFlag /></TrayIcon>
          <TrayIcon $w={25}><TrayPower /></TrayIcon>
          <TrayIcon><TraySignal /></TrayIcon>
          <TrayIcon><TraySound /></TrayIcon>
          <Clock>7:18 PM<br />2/20/2017</Clock>
        </Tray>
        <ShowDesktop />
      </Taskbar>
    </Screen>
  )
}
